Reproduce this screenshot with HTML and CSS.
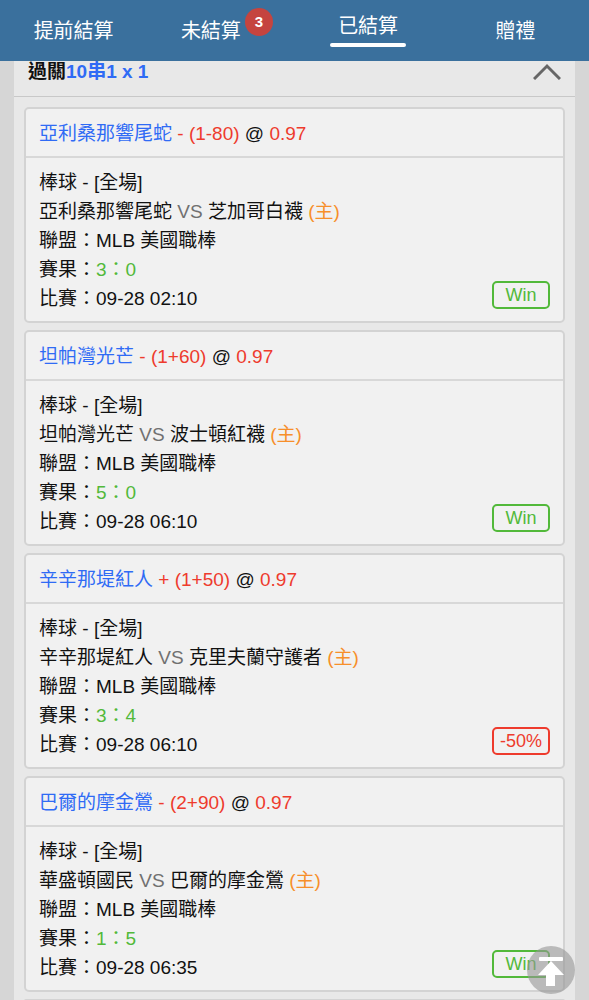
FILE: index.html
```html
<!DOCTYPE html>
<html lang="zh-Hant">
<head>
    <meta charset="UTF-8">
    <meta name="viewport" content="width=device-width, initial-scale=1.0">
    <title>已結算</title>
    <link rel="stylesheet" href="styles.css">
</head>
<body>
    <nav class="tabs">
        <a class="tab" href="#early">提前結算</a>
        <a class="tab" href="#open">未結算<span class="count">3</span></a>
        <a class="tab active" href="#settled">已結算</a>
        <a class="tab" href="#gift">贈禮</a>
    </nav>

    <main class="content">
        <section class="panel">
            <header class="panel-header">
                <h2>過關<span class="blue">10串1 x 1</span></h2>
                <button class="toggle" type="button" aria-label="收合">
                    <svg width="28" height="17" viewBox="0 0 28 17" fill="none" stroke="#666" stroke-width="3">
                        <path d="M1 16 L14 3 L27 16"/>
                    </svg>
                </button>
            </header>

            <div class="bets">
                <article class="bet">
                    <h3><span class="blue">亞利桑那響尾蛇</span> <span class="red">- (1-80)</span> @ <span class="red">0.97</span></h3>
                    <div class="bet-body">
                        <div class="details">
                            <p>棒球 - [全場]</p>
                            <p>亞利桑那響尾蛇 <span class="vs">VS</span> 芝加哥白襪 <span class="home">(主)</span></p>
                            <p>聯盟：MLB 美國職棒</p>
                            <p>賽果：<span class="green">3：0</span></p>
                            <p>比賽：09-28 02:10</p>
                        </div>
                        <span class="result green">Win</span>
                    </div>
                </article>

                <article class="bet">
                    <h3><span class="blue">坦帕灣光芒</span> <span class="red">- (1+60)</span> @ <span class="red">0.97</span></h3>
                    <div class="bet-body">
                        <div class="details">
                            <p>棒球 - [全場]</p>
                            <p>坦帕灣光芒 <span class="vs">VS</span> 波士頓紅襪 <span class="home">(主)</span></p>
                            <p>聯盟：MLB 美國職棒</p>
                            <p>賽果：<span class="green">5：0</span></p>
                            <p>比賽：09-28 06:10</p>
                        </div>
                        <span class="result green">Win</span>
                    </div>
                </article>

                <article class="bet">
                    <h3><span class="blue">辛辛那堤紅人</span> <span class="red">+ (1+50)</span> @ <span class="red">0.97</span></h3>
                    <div class="bet-body">
                        <div class="details">
                            <p>棒球 - [全場]</p>
                            <p>辛辛那堤紅人 <span class="vs">VS</span> 克里夫蘭守護者 <span class="home">(主)</span></p>
                            <p>聯盟：MLB 美國職棒</p>
                            <p>賽果：<span class="green">3：4</span></p>
                            <p>比賽：09-28 06:10</p>
                        </div>
                        <span class="result red">-50%</span>
                    </div>
                </article>

                <article class="bet">
                    <h3><span class="blue">巴爾的摩金鶯</span> <span class="red">- (2+90)</span> @ <span class="red">0.97</span></h3>
                    <div class="bet-body">
                        <div class="details">
                            <p>棒球 - [全場]</p>
                            <p>華盛頓國民 <span class="vs">VS</span> 巴爾的摩金鶯 <span class="home">(主)</span></p>
                            <p>聯盟：MLB 美國職棒</p>
                            <p>賽果：<span class="green">1：5</span></p>
                            <p>比賽：09-28 06:35</p>
                        </div>
                        <span class="result green">Win</span>
                    </div>
                </article>

                <article class="bet"></article>
            </div>
        </section>
    </main>

    <button class="to-top" type="button" aria-label="回到頂部">
        <svg width="48" height="48" viewBox="0 0 48 48" fill="#fff">
            <rect x="12" y="11" width="24" height="4" rx="1"/>
            <path d="M24 15 L37 29 H28 V40 H19 V29 H11 Z"/>
        </svg>
    </button>
</body>
</html>
```
FILE: styles.css
```css
* {
    box-sizing: border-box;
}

body {
    display: flex;
    flex-direction: column;
    height: 100vh;
    margin: 0;
    overflow: hidden;
    background-color: #d6d6d6;
    color: #111;
    font-family: "Liberation Sans", "Noto Sans CJK TC", sans-serif;
    font-size: 19px;
    line-height: 29px;
}

h2,
h3,
p {
    margin: 0;
    font-size: 19px;
}

button {
    padding: 0;
    border: 0;
    background: none;
    cursor: pointer;
}

svg {
    display: block;
}

.tabs {
    display: grid;
    grid-template-columns: repeat(4, 1fr);
    flex: none;
    height: 61px;
    background-color: #3a709d;
}

.tab {
    display: flex;
    justify-content: center;
    align-items: center;
    padding-top: 2px;
    color: #fff;
    font-size: 20px;
    text-decoration: none;
}

.tab.active {
    flex-direction: column;
    gap: 2px;
    padding-top: 0;
    padding-bottom: 2px;
}

.tab.active::after {
    content: "";
    width: 76px;
    height: 4px;
    border-radius: 2px;
    background-color: #fff;
}

.count {
    width: 28px;
    height: 28px;
    margin: 0 -12px 20px 4px;
    border-radius: 50%;
    background-color: #c5443f;
    font-size: 15px;
    font-weight: bold;
    line-height: 28px;
    text-align: center;
}

.content {
    flex: 1;
    min-height: 0;
    padding: 0 14px;
    overflow: hidden;
}

.panel {
    background-color: #e8e8e8;
}

.panel-header {
    display: flex;
    justify-content: space-between;
    align-items: flex-start;
    height: 36px;
    padding: 0 14px;
    border-bottom: 1px solid #c8c8c8;
}

.panel-header h2 {
    line-height: 22px;
}

.toggle {
    padding-top: 2px;
}

.bets {
    display: flex;
    flex-direction: column;
    gap: 7px;
    padding: 10px;
}

.bet {
    border: 2px solid #d3d3d3;
    border-radius: 5px;
    background-color: #f1f1f1;
}

.bet h3 {
    padding: 10px 13px 8px;
    border-bottom: 2px solid #d8d8d8;
    font-weight: normal;
}

.bet-body {
    display: flex;
    justify-content: space-between;
    align-items: flex-end;
    padding: 10px 13px 8px;
}

.result {
    width: 58px;
    margin-bottom: 4px;
    border: 2px solid;
    border-radius: 5px;
    font-size: 18px;
    line-height: 24px;
    text-align: center;
}

.blue {
    color: #2f6bf5;
}

.red {
    color: #ee3b2d;
}

.green {
    color: #52b93a;
}

.vs {
    color: #707070;
}

.home {
    color: #f78f2a;
}

.to-top {
    position: fixed;
    right: 14px;
    bottom: 6px;
    border-radius: 50%;
    background-color: rgba(150, 150, 150, 0.6);
}
```
